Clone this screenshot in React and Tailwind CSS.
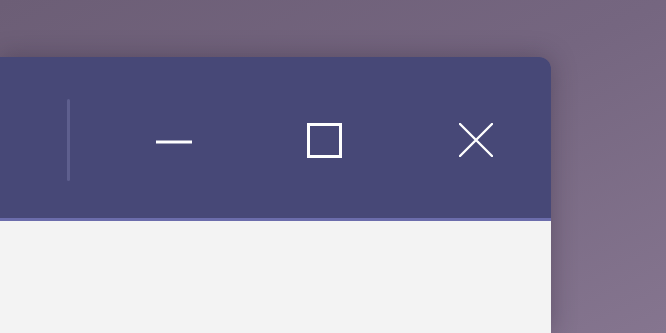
import React from "react";

const App = () => {
  return (
    <div className="w-[666px] h-[333px] overflow-hidden bg-gradient-to-br from-[#6c5e76] via-[#756680] to-[#85758f] pt-[57px] font-['Liberation_Sans',sans-serif]">
      {/* Window */}
      <div className="w-[551px] h-full flex flex-col rounded-tr-[12px] overflow-hidden shadow-[0_0_24px_rgba(40,30,50,0.35)]">
        {/* Title bar */}
        <div className="h-[164px] flex items-center pt-[5px] bg-[#474877] border-b-[3px] border-[#6b6cab]">
          <div className="flex-1 flex items-center pl-[67px]">
            <div className="w-[3px] h-[82px] bg-[#5e5f8e] rounded-full" />
          </div>
          <div className="flex items-center">
            <button className="w-[151px] h-[60px] flex items-center justify-center pt-[4px]">
              <svg width="36" height="4" viewBox="0 0 36 4">
                <line x1="0" y1="2" x2="36" y2="2" stroke="#ffffff" strokeWidth="3" />
              </svg>
            </button>
            <button className="w-[151px] h-[60px] flex items-center justify-center">
              <svg width="35" height="35" viewBox="0 0 35 35">
                <rect x="1.5" y="1.5" width="32" height="32" fill="none" stroke="#ffffff" strokeWidth="3" />
              </svg>
            </button>
            <button className="w-[151px] h-[60px] flex items-center justify-center">
              <svg width="34" height="34" viewBox="0 0 34 34">
                <path d="M1 1 L33 33 M33 1 L1 33" stroke="#ffffff" strokeWidth="2.4" strokeLinecap="round" />
              </svg>
            </button>
          </div>
        </div>
        {/* Content */}
        <div className="flex-1 bg-[#f3f3f3]" />
      </div>
    </div>
  );
};

export default App;
